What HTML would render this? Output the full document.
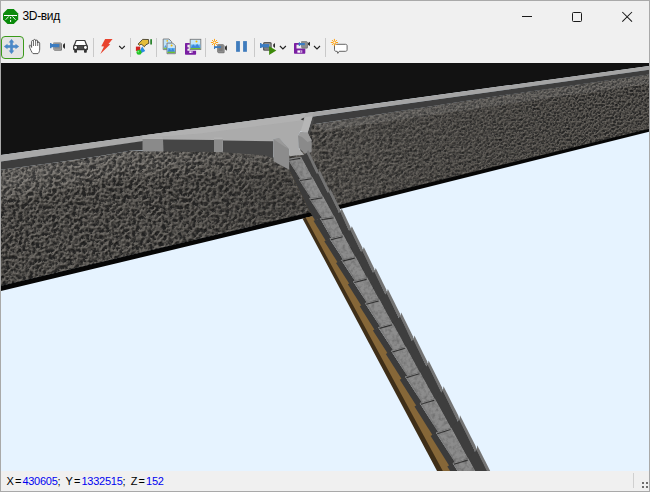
<!DOCTYPE html>
<html lang="ru"><head><meta charset="utf-8"><title>3D-вид</title>
<style>
html,body{margin:0;padding:0;background:#f0f0f0;}
body{width:650px;height:492px;overflow:hidden;position:relative;font-family:"Liberation Sans","DejaVu Sans",sans-serif;}
#win{position:absolute;left:0;top:0;width:648px;height:490px;border:1px solid #a9a9a9;background:#f0f0f0;}
#title{position:absolute;left:22.5px;top:9px;font-size:12px;line-height:15px;color:#000;letter-spacing:-0.35px;white-space:nowrap;}
#status{position:absolute;left:6.5px;top:474px;font-size:11px;line-height:14px;color:#000;white-space:nowrap;letter-spacing:1.05px;}
#status b{font-weight:normal;color:#0000f0;letter-spacing:-0.25px;}
#sel{position:absolute;left:1px;top:36px;width:21px;height:21px;border:1px solid #3a9a1a;border-radius:4px;background:#e4e4e4;}
.sep{position:absolute;top:38px;width:1px;height:19px;background:#c9c9c9;}
svg{position:absolute;left:0;top:0;}
</style></head><body>
<div id="win"></div>
<div id="title">3D-вид</div>
<div id="sel"></div>
<div class="sep" style="left:93px"></div><div class="sep" style="left:130px"></div><div class="sep" style="left:156px"></div>
<div class="sep" style="left:205px"></div><div class="sep" style="left:254px"></div><div class="sep" style="left:325px"></div>
<div class="sep" style="left:633px;top:473px;height:15px;background:#d0d0d0"></div>
<svg width="650" height="492" viewBox="0 0 650 492">
<defs>
<clipPath id="sc"><rect x="1" y="63" width="648" height="408"/></clipPath>
<filter id="gr1" x="0" y="60" width="650" height="240" filterUnits="userSpaceOnUse" color-interpolation-filters="sRGB">
<feTurbulence type="fractalNoise" baseFrequency="0.3" numOctaves="3" seed="7" result="n"/>
<feDiffuseLighting in="n" surfaceScale="2.2" diffuseConstant="1" lighting-color="#807c76" result="l"><feDistantLight azimuth="235" elevation="52"/></feDiffuseLighting>
<feColorMatrix in="n" type="matrix" values="0 0 0 0 0.15  0 0 0 0 0.15  0 0 0 0 0.15  0 0 0 1 0" result="a"/>
<feComponentTransfer in="a" result="m"><feFuncA type="table" tableValues="1 1 1 0.95 0.55 0.12 0 0 0 0 0"/></feComponentTransfer>
<feMerge><feMergeNode in="l"/><feMergeNode in="m"/></feMerge>
</filter>
<filter id="gr2" x="0" y="60" width="650" height="240" filterUnits="userSpaceOnUse" color-interpolation-filters="sRGB">
<feTurbulence type="fractalNoise" baseFrequency="0.55" numOctaves="2" seed="12" result="n"/>
<feDiffuseLighting in="n" surfaceScale="1.9" diffuseConstant="1" lighting-color="#6e6a64" result="l"><feDistantLight azimuth="235" elevation="50"/></feDiffuseLighting>
<feColorMatrix in="n" type="matrix" values="0 0 0 0 0.16  0 0 0 0 0.16  0 0 0 0 0.16  0 0 0 1 0" result="a"/>
<feComponentTransfer in="a" result="m"><feFuncA type="table" tableValues="1 1 1 1 0.45 0.1 0 0 0 0 0"/></feComponentTransfer>
<feMerge><feMergeNode in="l"/><feMergeNode in="m"/></feMerge>
</filter>
<filter id="cn" x="270" y="100" width="240" height="380" filterUnits="userSpaceOnUse" color-interpolation-filters="sRGB">
<feTurbulence type="fractalNoise" baseFrequency="0.28" numOctaves="2" seed="5"/>
<feColorMatrix type="matrix" values="0 0 0 0 0.5  0 0 0 0 0.5  0 0 0 0 0.5  2.2 0 0 0 -0.85"/>
</filter>
<filter id="cn2" x="270" y="100" width="240" height="380" filterUnits="userSpaceOnUse" color-interpolation-filters="sRGB">
<feTurbulence type="fractalNoise" baseFrequency="0.28" numOctaves="2" seed="9"/>
<feColorMatrix type="matrix" values="0 0 0 0 0.05  0 0 0 0 0.05  0 0 0 0 0.05  2.0 0 0 0 -0.85"/>
</filter>
<linearGradient id="fade" x1="0" y1="0" x2="650" y2="0" gradientUnits="userSpaceOnUse">
<stop offset="0.25" stop-color="#fff" stop-opacity="0"/><stop offset="0.9" stop-color="#fff" stop-opacity="1"/>
</linearGradient>
<mask id="mfade" maskUnits="userSpaceOnUse" x="0" y="60" width="650" height="240"><rect x="0" y="60" width="650" height="240" fill="url(#fade)"/></mask>
</defs>
<g clip-path="url(#sc)">
<rect x="1" y="63" width="648" height="408" fill="#e6f3ff"/>
<polygon points="0.0,62.0 650.0,62.0 650.0,65.9 0.0,155.1" fill="#121212"/>
<clipPath id="gc"><polygon points="0.0,170.0 65.0,161.3 100.0,156.0 130.0,150.8 222.9,151.0 265.0,154.0 280.0,160.0 300.0,150.0 307.0,135.0 311.5,121.0 316.0,124.0 350.0,118.8 500.0,95.8 650.0,74.3 650.0,128.8 326.0,208.3 324.0,209.3 0.0,286.2"/></clipPath>
<g clip-path="url(#gc)">
<rect x="0" y="60" width="650" height="240" filter="url(#gr1)"/>
<g mask="url(#mfade)"><rect x="0" y="60" width="650" height="240" filter="url(#gr2)"/></g>
<polygon points="0.0,167.0 130.0,150.0 170.0,150.0 100.0,162.5 0.0,189.0" fill="#fff" opacity="0.08"/>
<polygon points="0.0,189.0 100.0,162.5 170.0,150.0 280.0,151.0 285.0,165.0 230.0,160.0 120.0,172.0 0.0,200.0" fill="#fff" opacity="0.04"/>
<polygon points="312.0,124.0 650.0,74.3 650.0,83.5 324.0,130.5" fill="#fff" opacity="0.10"/>
<polygon points="0.0,205.0 120.0,178.0 285.0,172.0 305.0,211.0 0.0,286.0" fill="#000" opacity="0.10"/>
</g>
<polygon points="0.0,285.9 324.0,209.0 324.0,213.5 0.0,291.3" fill="#060606"/>
<polygon points="326.0,208.0 650.0,128.5 650.0,131.4 326.0,212.4" fill="#060606"/>
<polygon points="0.0,155.1 143.0,135.5 143.0,141.5 0.0,161.6" fill="#a8a8a8"/>
<polygon points="0.0,161.6 143.0,141.0 143.0,150.3 130.0,150.8 100.0,156.0 65.0,161.3 0.0,170.0" fill="#3d3d3d"/>
<polygon points="304.0,113.4 650.0,65.9 650.0,69.7 304.0,117.8" fill="#a4a4a4"/>
<polygon points="310.0,117.0 650.0,69.7 650.0,74.3 500.0,95.8 350.0,118.8 312.0,124.5" fill="#3d3d3d"/>
<polygon points="142.5,135.6 313.0,112.2 312.5,119.0 308.0,133.0 300.6,131.3 298.0,135.6 298.4,147.7 304.0,154.8 289.2,156.2 289.2,149.1 279.2,138.0 273.2,138.9 273.2,142.5 230.0,141.5 163.0,141.0 142.5,141.0" fill="#ababab"/>
<polygon points="142.5,135.6 306.0,113.1 304.0,120.0 200.0,133.5 142.5,138.0" fill="#b4b4b4" opacity="0.7"/>
<polygon points="163.0,139.6 214.0,140.1 214.0,152.0 163.0,151.5" fill="#454545"/>
<polygon points="222.9,140.4 273.4,141.2 273.4,158.5 265.0,155.3 222.9,152.2" fill="#454545"/>
<polygon points="142.5,139.0 163.0,139.0 163.5,151.3 142.5,151.5" fill="#8a8a8a"/>
<polygon points="142.5,137.3 162.0,137.3 163.0,139.0 142.5,139.0" fill="#b2b2b2"/>
<polygon points="214.0,139.2 222.9,139.2 222.9,152.2 214.0,152.0" fill="#8c8c8c"/>
<polygon points="214.0,137.4 222.3,137.4 222.9,139.2 214.0,139.2" fill="#b2b2b2"/>
<polygon points="312.0,118.5 313.4,117.6 314.0,120.6 309.0,135.6 307.7,132.7" fill="#484848"/>
<polygon points="300.6,131.3 305.3,117.1 312.0,116.3 312.0,118.5 307.7,132.7" fill="#b6b6b6"/>
<polygon points="300.6,119.2 304.3,117.4 303.4,120.6" fill="#333"/>
<polygon points="298.0,135.6 300.6,132.0 307.7,132.7 311.7,140.6 311.7,152.0 305.5,154.0 298.4,147.7" fill="#8a8a8a"/>
<polygon points="298.0,135.6 300.6,132.0 307.7,132.7 311.7,140.6 307.5,142.0 302.0,137.0" fill="#9b9b9b"/>
<polygon points="302.5,218.4 313.1,216.3 454.2,475.0 439.2,475.0" fill="#3e2e18"/>
<polygon points="305.6,217.6 313.1,216.3 455.2,475.0 445.0,475.0" fill="#866738"/>
<clipPath id="chc"><polygon points="289.2,150.0 520.0,150.0 520.0,480.0 435.8,480.0 297.7,217.0 310.5,213.5 289.2,170.0"/></clipPath>
<g clip-path="url(#chc)">
<polygon points="290.2,172.0 291.4,172.0 312.1,213.0 310.3,213.0" fill="#7d5f2c"/>
<polygon points="289.0,160.0 308.8,160.0 488.2,475.0 460.6,475.0" fill="#3e3e3e"/>
<polygon points="311.7,165.0 314.7,165.0 491.6,475.0 488.7,475.0" fill="#747474"/>
<polygon points="281.1,161.2 287.5,158.8 300.3,178.9 293.7,181.3" fill="#3b3b3b"/>
<polygon points="287.5,158.8 301.3,156.7 312.2,177.0 300.3,178.9" fill="#8d8d8d"/>
<polygon points="287.5,158.8 289.5,158.5 301.4,178.7 300.3,178.9" fill="#7c7c7c"/>
<polygon points="301.3,156.7 306.6,152.8 316.5,173.3 312.2,177.0" fill="#3e3e3e"/>
<polygon points="306.6,152.8 308.1,150.0 318.2,170.5 316.5,173.3" fill="#747474"/>
<line x1="288.9" y1="160.2" x2="300.3" y2="158.4" stroke="#303030" stroke-width="1.1"/>
<polygon points="292.2,181.6 298.6,179.1 310.9,198.1 304.3,200.5" fill="#3b3b3b"/>
<polygon points="298.6,179.1 312.6,177.0 323.0,196.2 310.9,198.1" fill="#8d8d8d"/>
<polygon points="298.6,179.1 300.6,178.8 312.0,197.9 310.9,198.1" fill="#7c7c7c"/>
<polygon points="312.6,177.0 318.1,172.9 327.4,192.3 323.0,196.2" fill="#3e3e3e"/>
<polygon points="318.1,172.9 319.6,170.0 329.0,189.4 327.4,192.3" fill="#747474"/>
<line x1="300.0" y1="180.5" x2="311.7" y2="178.7" stroke="#303030" stroke-width="1.1"/>
<polygon points="302.7,200.8 309.1,198.3 321.9,218.1 315.2,220.6" fill="#3b3b3b"/>
<polygon points="309.1,198.3 323.3,196.2 334.2,216.2 321.9,218.1" fill="#8d8d8d"/>
<polygon points="309.1,198.3 311.1,198.0 323.0,217.9 321.9,218.1" fill="#7c7c7c"/>
<polygon points="323.3,196.2 329.0,191.9 338.7,212.1 334.2,216.2" fill="#3e3e3e"/>
<polygon points="329.0,191.9 330.4,188.9 340.3,209.1 338.7,212.1" fill="#747474"/>
<line x1="310.5" y1="199.7" x2="322.4" y2="197.9" stroke="#303030" stroke-width="1.1"/>
<polygon points="313.5,220.8 320.1,218.3 331.4,237.9 325.9,240.9" fill="#3b3b3b"/>
<polygon points="320.1,218.3 334.5,216.2 343.3,235.1 331.4,237.9" fill="#8d8d8d"/>
<polygon points="320.1,218.3 322.1,218.0 332.4,237.7 331.4,237.9" fill="#7c7c7c"/>
<polygon points="334.5,216.2 340.4,211.7 348.7,230.2 343.3,235.1" fill="#3e3e3e"/>
<polygon points="340.4,211.7 341.7,208.6 350.4,226.9 348.7,230.2" fill="#747474"/>
<line x1="321.5" y1="219.7" x2="333.6" y2="217.9" stroke="#303030" stroke-width="1.1"/>
<polygon points="324.3,241.3 329.5,238.4 343.2,259.4 337.7,262.5" fill="#3b3b3b"/>
<polygon points="329.5,238.4 343.7,235.0 355.2,256.4 343.2,259.4" fill="#8d8d8d"/>
<polygon points="329.5,238.4 331.5,237.9 344.3,259.1 343.2,259.4" fill="#7c7c7c"/>
<polygon points="343.7,235.0 350.4,229.7 360.8,251.3 355.2,256.4" fill="#3e3e3e"/>
<polygon points="350.4,229.7 351.8,226.3 362.4,247.8 360.8,251.3" fill="#747474"/>
<line x1="330.9" y1="239.7" x2="342.8" y2="236.8" stroke="#303030" stroke-width="1.1"/>
<polygon points="336.0,262.9 341.3,259.9 355.0,280.8 349.5,283.9" fill="#3b3b3b"/>
<polygon points="341.3,259.9 355.6,256.3 367.1,277.6 355.0,280.8" fill="#8d8d8d"/>
<polygon points="341.3,259.9 343.2,259.4 356.0,280.5 355.0,280.8" fill="#7c7c7c"/>
<polygon points="355.6,256.3 362.4,250.7 372.7,272.2 367.1,277.6" fill="#3e3e3e"/>
<polygon points="362.4,250.7 363.8,247.1 374.2,268.6 372.7,272.2" fill="#747474"/>
<line x1="342.6" y1="261.1" x2="354.7" y2="258.1" stroke="#303030" stroke-width="1.1"/>
<polygon points="347.8,284.3 353.0,281.3 367.0,302.5 361.4,305.7" fill="#3b3b3b"/>
<polygon points="353.0,281.3 367.5,277.5 379.2,299.3 367.0,302.5" fill="#8d8d8d"/>
<polygon points="353.0,281.3 355.0,280.8 368.0,302.3 367.0,302.5" fill="#7c7c7c"/>
<polygon points="367.5,277.5 374.4,271.6 384.9,293.6 379.2,299.3" fill="#3e3e3e"/>
<polygon points="374.4,271.6 375.7,267.9 386.4,289.8 384.9,293.6" fill="#747474"/>
<line x1="354.3" y1="282.5" x2="366.6" y2="279.4" stroke="#303030" stroke-width="1.1"/>
<polygon points="359.7,306.2 365.0,303.1 380.2,326.6 374.7,329.9" fill="#3b3b3b"/>
<polygon points="365.0,303.1 379.6,299.2 392.6,323.2 380.2,326.6" fill="#8d8d8d"/>
<polygon points="365.0,303.1 366.9,302.6 381.3,326.3 380.2,326.6" fill="#7c7c7c"/>
<polygon points="379.6,299.2 386.7,292.9 398.4,317.2 392.6,323.2" fill="#3e3e3e"/>
<polygon points="386.7,292.9 387.8,289.1 399.8,313.3 398.4,317.2" fill="#747474"/>
<line x1="366.3" y1="304.3" x2="378.7" y2="301.0" stroke="#303030" stroke-width="1.1"/>
<polygon points="372.9,330.4 378.2,327.2 393.2,350.2 387.7,353.5" fill="#3b3b3b"/>
<polygon points="378.2,327.2 392.9,323.1 405.7,346.6 393.2,350.2" fill="#8d8d8d"/>
<polygon points="378.2,327.2 380.1,326.6 394.3,349.9 393.2,350.2" fill="#7c7c7c"/>
<polygon points="392.9,323.1 400.2,316.5 411.6,340.3 405.7,346.6" fill="#3e3e3e"/>
<polygon points="400.2,316.5 401.2,312.5 412.9,336.2 411.6,340.3" fill="#747474"/>
<line x1="379.5" y1="328.4" x2="392.1" y2="324.9" stroke="#303030" stroke-width="1.1"/>
<polygon points="385.8,354.0 391.1,350.8 407.3,375.7 401.8,379.2" fill="#3b3b3b"/>
<polygon points="391.1,350.8 406.0,346.5 419.9,372.0 407.3,375.7" fill="#8d8d8d"/>
<polygon points="391.1,350.8 393.0,350.2 408.4,375.4 407.3,375.7" fill="#7c7c7c"/>
<polygon points="406.0,346.5 413.4,339.6 425.9,365.4 419.9,372.0" fill="#3e3e3e"/>
<polygon points="413.4,339.6 414.4,335.5 427.1,361.2 425.9,365.4" fill="#747474"/>
<line x1="392.4" y1="352.0" x2="405.2" y2="348.3" stroke="#303030" stroke-width="1.1"/>
<polygon points="399.8,379.7 405.1,376.4 422.0,402.4 416.5,405.9" fill="#3b3b3b"/>
<polygon points="405.1,376.4 420.2,371.9 434.7,398.5 422.0,402.4" fill="#8d8d8d"/>
<polygon points="405.1,376.4 407.0,375.8 423.1,402.1 422.0,402.4" fill="#7c7c7c"/>
<polygon points="420.2,371.9 427.8,364.7 440.9,391.6 434.7,398.5" fill="#3e3e3e"/>
<polygon points="427.8,364.7 428.6,360.4 441.9,387.2 440.9,391.6" fill="#747474"/>
<line x1="406.4" y1="377.6" x2="419.4" y2="373.7" stroke="#303030" stroke-width="1.1"/>
<polygon points="414.5,406.5 419.7,403.1 438.2,431.9 432.6,435.3" fill="#3b3b3b"/>
<polygon points="419.7,403.1 435.1,398.4 451.2,427.8 438.2,431.9" fill="#8d8d8d"/>
<polygon points="419.7,403.1 421.6,402.5 439.3,431.5 438.2,431.9" fill="#7c7c7c"/>
<polygon points="435.1,398.4 442.8,390.8 457.5,420.7 451.2,427.8" fill="#3e3e3e"/>
<polygon points="442.8,390.8 443.5,386.3 458.5,416.1 457.5,420.7" fill="#747474"/>
<line x1="421.0" y1="404.3" x2="434.2" y2="400.2" stroke="#303030" stroke-width="1.1"/>
<polygon points="430.6,436.0 435.9,432.6 455.1,462.4 449.4,465.9" fill="#3b3b3b"/>
<polygon points="435.9,432.6 451.5,427.7 468.2,458.3 455.1,462.4" fill="#8d8d8d"/>
<polygon points="435.9,432.6 437.8,432.0 456.1,462.1 455.1,462.4" fill="#7c7c7c"/>
<polygon points="451.5,427.7 459.4,419.8 474.7,450.8 468.2,458.3" fill="#3e3e3e"/>
<polygon points="459.4,419.8 460.0,415.2 475.6,446.1 474.7,450.8" fill="#747474"/>
<line x1="437.2" y1="433.8" x2="450.6" y2="429.6" stroke="#303030" stroke-width="1.1"/>
<polygon points="447.3,466.5 452.6,463.1 473.0,494.9 467.3,498.4" fill="#3b3b3b"/>
<polygon points="452.6,463.1 468.5,458.2 486.3,490.8 473.0,494.9" fill="#8d8d8d"/>
<polygon points="452.6,463.1 454.5,462.6 474.0,494.6 473.0,494.9" fill="#7c7c7c"/>
<polygon points="468.5,458.2 476.7,450.0 493.0,483.0 486.3,490.8" fill="#3e3e3e"/>
<polygon points="476.7,450.0 477.2,445.2 493.8,478.1 493.0,483.0" fill="#747474"/>
<line x1="453.9" y1="464.3" x2="467.7" y2="460.1" stroke="#303030" stroke-width="1.1"/>
<polygon points="465.1,499.1 470.4,495.7 492.3,529.9 486.5,533.5" fill="#3b3b3b"/>
<polygon points="470.4,495.7 486.7,490.7 505.9,525.7 492.3,529.9" fill="#8d8d8d"/>
<polygon points="470.4,495.7 472.3,495.1 493.3,529.6 492.3,529.9" fill="#7c7c7c"/>
<polygon points="486.7,490.7 495.1,482.1 512.8,517.6 505.9,525.7" fill="#3e3e3e"/>
<polygon points="495.1,482.1 495.5,477.1 513.5,512.5 512.8,517.6" fill="#747474"/>
<line x1="471.7" y1="496.9" x2="485.8" y2="492.5" stroke="#303030" stroke-width="1.1"/>
<clipPath id="flc"><polygon points="286.4,157.0 301.5,157.0 477.4,475.0 461.8,475.0"/></clipPath>
<g clip-path="url(#flc)" opacity="0.25"><rect x="270" y="100" width="240" height="380" filter="url(#cn)"/><rect x="270" y="100" width="240" height="380" filter="url(#cn2)"/></g>
</g>
<polygon points="273.2,138.9 279.2,138.0 289.2,149.1 289.2,169.7 273.5,161.2" fill="#8c8c8c"/><polygon points="273.2,138.9 279.2,138.0 289.2,149.1 284.5,146.5" fill="#999"/>
</g>
<!-- title icon -->
<polygon points="7.5,9 13.8,9 18.2,13.4 18.2,19.6 13.8,24 7.5,24 3,19.6 3,13.4" fill="#0a8a0a"/>
<rect x="4" y="15" width="13" height="1" fill="#fff"/>
<path d="M8.8 16.4L5.6 19.8M12.4 16.4L15.6 19.8" stroke="#e8f5e8" stroke-width="1" fill="none"/>
<path d="M10.6 17v1.6M10.6 20v2" stroke="#fff" stroke-width="1" fill="none"/>
<!-- window buttons -->
<path d="M522 16.5h10" stroke="#1a1a1a" stroke-width="1"/>
<rect x="572.5" y="12.5" width="9" height="9" rx="1" fill="none" stroke="#1a1a1a" stroke-width="1"/>
<path d="M622.3 12l9.7 9.7M632 12l-9.7 9.7" stroke="#1a1a1a" stroke-width="1.05" fill="none"/>
<!-- move -->
<g fill="#4a88c7">
<rect x="10.200" y="41.500" width="2.600" height="10"/><rect x="6.500" y="45.200" width="10" height="2.600"/>
<polygon points="11.500,38.900 14.300,42.500 8.700,42.500"/><polygon points="11.500,54.100 14.300,50.500 8.700,50.500"/>
<polygon points="3.900,46.500 7.500,43.700 7.500,49.300"/><polygon points="19.100,46.500 15.500,43.700 15.500,49.300"/>
</g>
<!-- hand -->
<path d="M33 53.600C31.800 52.600 30.200 49 29.300 46.200C29 45 30.300 44.600 30.800 45.600L31.600 47.400V41.500C31.600 40.200 33.500 40.200 33.500 41.500V40.400C33.500 39.100 35.600 39.100 35.600 40.400V41C35.600 39.800 37.700 39.800 37.700 41V43C37.700 41.900 39.700 41.900 39.700 43V49C39.700 51 39 52.600 38 53.600Z" fill="#fff" stroke="#4d4d4d" stroke-width="0.9"/>
<path d="M33.500 41.500V46M35.600 40.400V46M37.700 41V46" stroke="#4d4d4d" stroke-width="0.8" fill="none"/>
<!-- camera -->
<rect x="53.800" y="43" width="8.200" height="7.800" rx="1.200" fill="#777"/>
<rect x="53" y="42.200" width="8.200" height="7.800" rx="1.200" fill="#9b9b9b"/>
<rect x="54.800" y="43.600" width="5.400" height="5" rx=".6" fill="#8a8a8a"/>
<rect x="50" y="44" width="9.300" height="3.200" fill="#3b7cc1"/><rect x="50" y="43" width="1.500" height="5.200" fill="#3b7cc1"/>
<polygon points="65,43 65,49 63,47.300 63,44.700" fill="#2e2e2e"/>
<!-- car -->
<path d="M75.800 40h9.400l2.200 5.200h-13.800z" fill="#3a3a3a"/>
<path d="M76.600 41.100h7.800l1.500 3.800h-10.800z" fill="#fff"/>
<rect x="73" y="44.900" width="15" height="5.400" rx="1.300" fill="#3a3a3a"/>
<rect x="74.200" y="49.500" width="2.800" height="3.300" rx=".8" fill="#333"/><rect x="84" y="49.500" width="2.800" height="3.300" rx=".8" fill="#333"/>
<circle cx="75.600" cy="47.500" r="1.400" fill="#fff"/><circle cx="85.400" cy="47.500" r="1.400" fill="#fff"/>
<rect x="78" y="46" width="5" height="3" fill="#4c4c4c"/>
<!-- lightning -->
<polygon points="105.100,38.900 112.600,38.900 108.500,44.100 110.300,44.200 100.300,53.900 104,46.400 101.300,46.200" fill="#e8432e"/>
<path d="M119.200 46l2.800 2.800 2.800-2.800" stroke="#222" stroke-width="1.150" fill="none"/>
<!-- paint -->
<polygon points="138.100,44.100 142.600,39.400 148.500,39.500 148.800,43.300 145.900,44.800 144.400,46.700 142.600,45.200 141.100,44.100 139.600,45.300" fill="#e5bd3c" stroke="#2e2a1c" stroke-width="0.8"/>
<rect x="150.300" y="39.200" width="1.600" height="5.300" fill="#17781a"/>
<rect x="135.900" y="46.600" width="4.300" height="4.300" fill="#d42222"/>
<polygon points="142.200,46.600 145.200,51 141,53.200 140.200,50" fill="#2a8be2"/>
<circle cx="139" cy="52.300" r="2.500" fill="#25c425"/><circle cx="138.300" cy="51.600" r=".9" fill="#7be87b"/>
<!-- copy images -->
<g id="docA">
<path d="M163.200 39h5.800l2.600 2.600v8h-8.400z" fill="#bfe3fa" stroke="#787878" stroke-width="0.9"/>
</g>
<rect x="163.800" y="47.600" width="3.200" height="1.200" fill="#6dc030"/>
<circle cx="167.200" cy="40.900" r=".8" fill="#f5b800"/>
<path d="M164 47.600l1.500-2.600 1.400 2.600z" fill="#4d9be8"/>
<path d="M167 43.100h5.800l2.600 2.600v8h-8.400z" fill="#c6e6fb" stroke="#787878" stroke-width="0.9"/>
<rect x="167.500" y="48" width="7.400" height="3.800" fill="#58aef0"/>
<path d="M167.500 51.800l2-3.400 1.700 2 1.600-2.500 2.100 3.900z" fill="#3f86d8"/>
<rect x="167.500" y="51.700" width="7.400" height="1.300" fill="#6dc030"/>
<circle cx="171.600" cy="45.400" r="1" fill="#f5b800"/>
<!-- save image -->
<path d="M185 44c0-.6.400-1 1-1h3.800v1.700h-2.400v2.500h1.300v1.500h-1.300v2h8.700v3.100c0 .6-.4 1-1 1h-9.100c-.6 0-1-.4-1-1z" fill="#7a1fa2"/>
<rect x="189.300" y="51.300" width="3.700" height="1.700" fill="#fff"/><rect x="191.600" y="51.300" width="1" height="1.700" fill="#7a1fa2"/>
<rect x="190.200" y="39.300" width="10.600" height="10.200" fill="#c4e6fb" stroke="#7a7a7a" stroke-width="0.9"/>
<rect x="190.700" y="44.500" width="9.600" height="3.600" fill="#62b4f2"/>
<path d="M190.700 48.100l2.500-3.800 2 2.200 1.900-2.800 3.200 4.400z" fill="#3f86d8"/>
<rect x="190.700" y="48" width="9.600" height="1.100" fill="#6dc030"/>
<circle cx="196.500" cy="41.500" r="1" fill="#f5b800"/>
<!-- camera star -->
<rect x="217.700" y="44.900" width="6.900" height="8.300" rx="1.200" fill="#777"/>
<rect x="217" y="44.100" width="6.900" height="8.300" rx="1.200" fill="#8c8c8c"/>
<rect x="218.400" y="45.500" width="4.200" height="5.600" rx=".6" fill="#7d7d7d"/>
<rect x="214" y="46.200" width="6.900" height="1.800" fill="#3b7cc1"/><rect x="214" y="46.200" width="1.100" height="2.800" fill="#3b7cc1"/>
<polygon points="226.900,45.200 226.900,50.800 225,49.200 225,46.800" fill="#2e2e2e"/>
<g stroke="#ff9a00" stroke-width="0.9" fill="none"><path d="M214.500 38.900v7.200M210.900 42.500h7.200M212 40l5 5M217 40l-5 5"/></g>
<circle cx="214.500" cy="42.500" r="1.100" fill="#fff6dc"/>
<!-- pause -->
<rect x="236.100" y="41.100" width="3.800" height="10.700" fill="#3f7cbd"/><rect x="243.100" y="41.100" width="3.800" height="10.700" fill="#3f7cbd"/>
<!-- camera play -->
<rect x="263" y="42" width="8.700" height="8.700" rx="1.500" fill="#5a5a5a"/>
<rect x="264.200" y="43.200" width="6.300" height="6.300" rx=".8" fill="#9a9a9a"/>
<rect x="264.200" y="47.400" width="6.300" height="1" fill="#5a5a5a"/>
<rect x="260" y="44.100" width="9.100" height="3.300" fill="#3b7cc1"/><rect x="260" y="43" width="1.500" height="5" fill="#3b7cc1"/>
<polygon points="275,43 275,48 273.200,46.500 273.200,44.500" fill="#2e2e2e"/>
<polygon points="269.100,46.300 276.300,50.600 269.100,55" fill="#3d8a0a"/>
<path d="M279.900 46l3 2.900 3-2.900" stroke="#222" stroke-width="1.150" fill="none"/>
<!-- save camera -->
<path d="M294 44c0-.6.400-1 1-1h4.200v1.800h-2.700v3.600h8.800v4.400c0 .6-.4 1-1 1h-9.300c-.6 0-1-.4-1-1z" fill="#7a1fa2"/>
<rect x="297.400" y="50.400" width="4.800" height="2.300" fill="#fff"/><rect x="300.300" y="50.400" width="1.100" height="2.300" fill="#7a1fa2"/>
<rect x="301.600" y="41.800" width="6.200" height="6.600" rx="1" fill="#6a6a6a"/>
<rect x="301" y="41.100" width="6.200" height="6.600" rx="1" fill="#8e8e8e"/>
<rect x="298.800" y="43" width="6" height="2.200" fill="#3b7cc1"/><rect x="298.800" y="42.300" width="1.200" height="3.600" fill="#3b7cc1"/>
<polygon points="310,41.800 310,46 308,44.800 308,43" fill="#2e2e2e"/>
<path d="M314 46l3 2.900 3-2.900" stroke="#222" stroke-width="1.150" fill="none"/>
<!-- bubble -->
<path d="M336 44.300h9.600c.9 0 1.500.6 1.500 1.500v4c0 .9-.6 1.500-1.500 1.500h-6.400l-1.400 2.100-.6-2.100h-1.200c-.9 0-1.500-.6-1.500-1.500v-4c0-.9.600-1.500 1.500-1.500z" fill="#fff" stroke="#555" stroke-width="0.9"/>
<circle cx="334.400" cy="42.500" r="2.300" fill="#f0f0f0"/>
<g stroke="#ff9a00" stroke-width="0.9" fill="none"><path d="M334.400 38.900v7.200M330.800 42.500h7.200M331.900 40l5 5M336.900 40l-5 5"/></g>
<circle cx="334.400" cy="42.500" r="1.100" fill="#fff6dc"/>
<!-- grip -->
<g fill="#6e6e6e"><rect x="642" y="482" width="2" height="2"/><rect x="646" y="482" width="2" height="2"/><rect x="642" y="486" width="2" height="2"/><rect x="646" y="486" width="2" height="2"/></g>

</svg>
<div id="status">X=<b>430605</b>; Y=<b>1332515</b>; Z=<b>152</b></div>
</body></html>
